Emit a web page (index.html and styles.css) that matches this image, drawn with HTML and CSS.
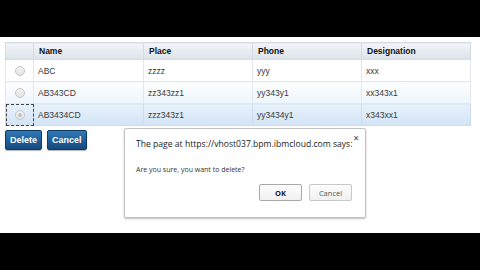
FILE: index.html
```html
<!DOCTYPE html>
<html>
<head>
<meta charset="utf-8">
<link rel="stylesheet" href="styles.css">
</head>
<body>
<div class="band top"></div>
<main class="page">
  <table class="grid">
    <colgroup>
      <col class="c0"><col class="c1"><col class="c2"><col class="c3"><col class="c4">
    </colgroup>
    <thead>
      <tr><th></th><th>Name</th><th>Place</th><th>Phone</th><th>Designation</th></tr>
    </thead>
    <tbody>
      <tr class="r1"><td class="sel"><span class="radio"></span></td><td>ABC</td><td>zzzz</td><td>yyy</td><td>xxx</td></tr>
      <tr class="r2"><td class="sel"><span class="radio"></span></td><td>AB343CD</td><td>zz343zz1</td><td>yy343y1</td><td>xx343x1</td></tr>
      <tr class="r3"><td class="sel focus"><span class="radio on"></span></td><td>AB3434CD</td><td>zzz343z1</td><td>yy3434y1</td><td>x343xx1</td></tr>
    </tbody>
  </table>
  <div class="actions">
    <button class="btn">Delete</button>
    <button class="btn">Cancel</button>
  </div>
  <div class="dialog">
    <div class="close">×</div>
    <div class="title">The page at https://vhost037.bpm.ibmcloud.com says:</div>
    <div class="msg">Are you sure, you want to delete?</div>
    <div class="dbtns">
      <button class="dbtn ok">OK</button>
      <button class="dbtn">Cancel</button>
    </div>
  </div>
</main>
<div class="band bottom"></div>
</body>
</html>
```
FILE: styles.css
```css
html, body { margin: 0; padding: 0; }
body { background: #000; width: 480px; height: 270px; overflow: hidden; font-family: "Liberation Sans", Arial, sans-serif; }
.band.top { height: 37px; background: #000; }
.band.bottom { height: 37px; background: #000; }
.page { position: relative; height: 196px; background: #fff; padding: 5px 0 0 5px; box-sizing: border-box; }
.grid { border-collapse: collapse; table-layout: fixed; width: 465px; font-size: 8.5px; color: #222; }
.c0 { width: 28px; } .c1 { width: 110px; } .c2 { width: 109px; } .c3 { width: 109px; } .c4 { width: 109px; }
.grid th { height: 17px; padding: 0 0 0 5px; text-align: left; font-weight: bold; color: #111; background: linear-gradient(#f3f5f8, #dce3ea); border: 1px solid #d4dbe2; box-sizing: border-box; }
.grid td { height: 22px; padding: 0 0 0 4px; border: 1px solid #e3e6ea; box-sizing: border-box; color: #383838; }
.grid td.sel { padding: 0; text-align: center; }
.r1 td { background: #fff; }
.r2 td { background: linear-gradient(#fdfeff, #eef5fc); }
.r3 td { background: linear-gradient(#e8f1fb, #d3e4f5); border-color: #cbdcee; }
.grid td.focus { outline: 1px dashed #444; outline-offset: -1px; }
.radio { display: inline-block; width: 8px; height: 8px; border: 1px solid #c4c4c4; border-radius: 50%; background: linear-gradient(#f4f4f4, #e4e4e4); vertical-align: middle; position: relative; }
.radio.on::after { content: ""; position: absolute; left: 2px; top: 2px; width: 4px; height: 4px; border-radius: 50%; background: #b9c2cc; }
.actions { display: flex; gap: 5px; margin-top: 4px; }
.btn { height: 20px; padding: 0 4px; font: bold 9px "Liberation Sans", Arial, sans-serif; color: #fff; background: linear-gradient(#2f78b5, #16497f); border: 1px solid #0d3a66; border-radius: 2px; box-shadow: 0 1px 1px rgba(0,0,0,0.3); }
.dialog { position: absolute; left: 124px; top: 91px; width: 242px; height: 90px; box-sizing: border-box; background: #fff; border: 1px solid #c3c3c3; border-radius: 2px; box-shadow: 0 1px 2px rgba(0,0,0,0.25); padding: 9px 10px 0 11px; font-family: "Open Sans", "DejaVu Sans", sans-serif; }
.close { position: absolute; right: 6px; top: 2px; font-size: 10px; color: #444; }
.title { font-size: 8.6px; color: #222; white-space: nowrap; }
.msg { font-size: 7px; color: #333; margin-top: 15px; }
.dbtns { display: flex; justify-content: flex-end; gap: 7px; margin-top: 10px; margin-right: 3px; }
.dbtn { width: 43px; height: 17px; font: 7.5px "Open Sans", "DejaVu Sans", sans-serif; color: #555; background: linear-gradient(#fcfcfc, #f1f1f1); border: 1px solid #c9c9c9; border-radius: 2px; padding: 0; }
.dbtn.ok { color: #222; font-weight: bold; border-color: #a8a8a8; }
```
